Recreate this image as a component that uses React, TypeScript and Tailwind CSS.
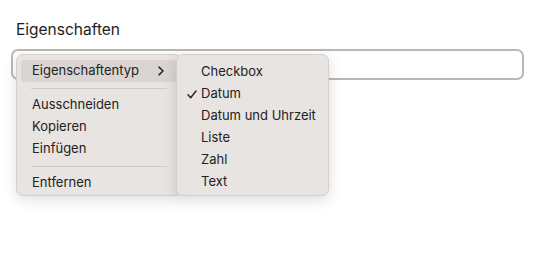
import React from "react";

const font = { fontFamily: "Inter, 'Noto Sans', sans-serif" };

function Row({ children, highlight }: { children: React.ReactNode; highlight?: boolean }) {
  return (
    <div className={`h-[22px] flex items-center rounded-[4px] ${highlight ? "bg-[#dad5d2]" : ""}`}>
      {children}
    </div>
  );
}

function Sep() {
  return (
    <div className="h-[12px] flex items-center px-[10px]">
      <div className="h-px w-full bg-[#cfcac7]" />
    </div>
  );
}

export default function App() {
  return (
    <div className="w-[549px] h-[277px] bg-white relative text-[#222]" style={font}>
      <div className="pt-[20px] px-[11px]">
        <div className="pl-[5px] text-[15.5px] leading-[20px] text-[#1d1d1d]">Eigenschaften</div>
        <div className="mt-[9px] h-[31px] w-[513px] rounded-[7px] border-2 border-[#b8b8b8] bg-white" />
      </div>

      {/* main menu */}
      <div className="absolute left-[16px] top-[54px] w-[166px] h-[142px] rounded-[7px] bg-[#e8e4e1] border border-[#d3cfcc] shadow-[0_4px_14px_rgba(0,0,0,0.12)] px-[4px] pt-[5px] pb-[4px] text-[13px]">
        <Row highlight>
          <span className="pl-[11px] flex-1">Eigenschaftentyp</span>
          <svg width="8" height="10" viewBox="0 0 8 10" className="mr-[12px]">
            <path d="M2 1.2 L6 5 L2 8.8" fill="none" stroke="#2a2a2a" strokeWidth="1.6" strokeLinecap="round" strokeLinejoin="round" />
          </svg>
        </Row>
        <Sep />
        <Row><span className="pl-[11px]">Ausschneiden</span></Row>
        <Row><span className="pl-[11px]">Kopieren</span></Row>
        <Row><span className="pl-[11px]">Einfügen</span></Row>
        <Sep />
        <Row><span className="pl-[11px]">Entfernen</span></Row>
      </div>

      {/* submenu */}
      <div className="absolute left-[176px] top-[54px] w-[153px] h-[142px] rounded-[7px] bg-[#e8e4e1] border border-[#d3cfcc] shadow-[0_4px_14px_rgba(0,0,0,0.14)] px-[4px] pt-[6px] pb-[4px] text-[13px]">
        {["Checkbox", "Datum", "Datum und Uhrzeit", "Liste", "Zahl", "Text"].map((t) => (
          <Row key={t}>
            <span className="w-[17px] flex justify-end pr-[1px]">
              {t === "Datum" && (
                <svg width="10" height="9" viewBox="0 0 10 9">
                  <path d="M1 4.8 L3.7 7.8 L9 1" fill="none" stroke="#2a2a2a" strokeWidth="1.5" strokeLinecap="round" strokeLinejoin="round" />
                </svg>
              )}
            </span>
            <span className="pl-[3px]">{t}</span>
          </Row>
        ))}
      </div>
    </div>
  );
}
